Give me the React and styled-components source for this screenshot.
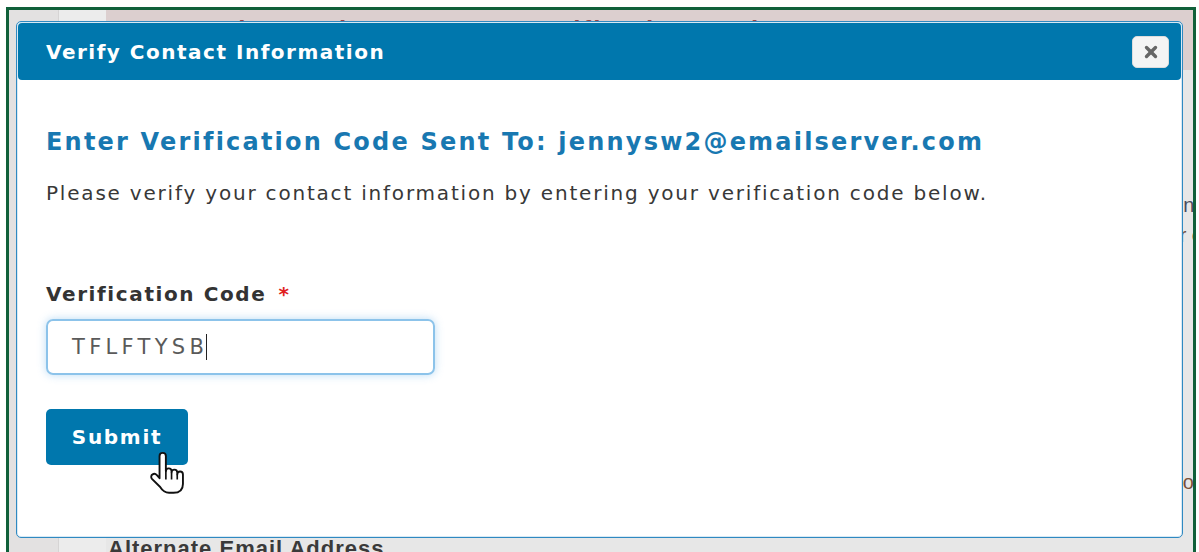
import styled, { createGlobalStyle } from "styled-components"
import { X } from "lucide-react"

const GlobalStyle = createGlobalStyle`
  html, body {
    margin: 0;
    padding: 0;
    background: #ffffff;
    overflow: hidden;
  }
  * {
    box-sizing: border-box;
  }
`

const Screen = styled.div`
  position: relative;
  width: 1199px;
  height: 552px;
  padding: 7px 3px 0 6px;
  overflow: hidden;
  font-family: "Liberation Sans", Arial, sans-serif;
`

/* page behind the dialog */
const Frame = styled.div`
  display: flex;
  height: 570px;
  border: 3px solid #10603a;
  border-bottom: none;
  overflow: hidden;
`

const SideRail = styled.div`
  width: 50px;
  flex: none;
  background: #e3e1e1;
  border-right: 1px solid #d6d4d4;
`

const SideGutter = styled.div`
  width: 47px;
  flex: none;
  background: #ececec;
`

const PageMain = styled.div`
  flex: 1;
  display: flex;
  flex-direction: column;
  background: #e7e7e7;
  min-width: 0;
`

const PageBanner = styled.div`
  height: 60px;
  flex: none;
  padding: 5px 0 0 113px;
  background: #dccfcf;
  color: #9a4545;
  font-size: 26px;
  line-height: 30px;
  font-weight: bold;
  letter-spacing: 2px;
  white-space: nowrap;
`

const PageBody = styled.div`
  display: flex;
  flex-direction: column;
`

const PeekLine = styled.div`
  margin-top: ${(p) => p.$gap}px;
  margin-right: ${(p) => p.$overhang}px;
  text-align: right;
  white-space: nowrap;
  font-size: 20px;
  line-height: 24px;
  color: ${(p) => p.$tone};
`

const PageHeading = styled.div`
  margin-top: 42px;
  padding-left: 2px;
  font-size: 22px;
  line-height: 26px;
  font-weight: bold;
  letter-spacing: 1px;
  color: #3a3a3a;
  white-space: nowrap;
`

/* dialog */
const Modal = styled.div`
  position: absolute;
  left: 16px;
  top: 21px;
  width: 1167px;
  height: 517px;
  display: flex;
  flex-direction: column;
  padding: 1px;
  background: #ffffff;
  border: 1px solid #2f89c1;
  border-radius: 5px;
  box-shadow: inset 0 0 0 1px #d7e9f5;
`

const ModalHeader = styled.div`
  height: 57px;
  flex: none;
  display: flex;
  align-items: center;
  justify-content: space-between;
  padding: 0 12px 0 28px;
  background: #0077ad;
  border-radius: 4px;
`

const ModalTitle = styled.h2`
  margin: 0;
  font-family: "DejaVu Sans", sans-serif;
  font-size: 20px;
  font-weight: bold;
  letter-spacing: 1.5px;
  color: #ffffff;
`

const CloseButton = styled.button`
  width: 37px;
  height: 32px;
  display: flex;
  align-items: center;
  justify-content: center;
  padding: 0;
  background: #f4f4f4;
  border: 1px solid #dcdcdc;
  border-radius: 5px;
  color: #666666;
  cursor: pointer;
`

const ModalBody = styled.div`
  display: flex;
  flex-direction: column;
  align-items: flex-start;
  padding: 47px 28px 0 28px;
`

const SentTo = styled.h3`
  margin: 0;
  font-family: "DejaVu Sans", sans-serif;
  font-size: 24px;
  line-height: 30px;
  font-weight: bold;
  letter-spacing: 2.2px;
  color: #1878b1;
`

const Hint = styled.p`
  margin: 23px 0 0;
  font-family: "DejaVu Sans", sans-serif;
  font-size: 20px;
  line-height: 26px;
  letter-spacing: 1.8px;
  color: #383838;
`

const FieldLabel = styled.label`
  margin-top: 75px;
  font-family: "DejaVu Sans", sans-serif;
  font-size: 20px;
  line-height: 26px;
  font-weight: bold;
  letter-spacing: 1.6px;
  color: #333333;
`

const Required = styled.span`
  margin-left: 12px;
  color: #e02020;
`

const CodeInput = styled.div`
  margin-top: 12px;
  width: 389px;
  height: 56px;
  display: flex;
  align-items: center;
  padding-left: 24px;
  border: 2px solid #8cc3ea;
  border-radius: 7px;
  box-shadow: 0 0 8px rgba(102, 175, 233, 0.45);
  font-family: "DejaVu Sans", sans-serif;
  font-size: 21px;
  letter-spacing: 4.3px;
  color: #5a5a5a;
`

const Caret = styled.span`
  width: 1px;
  height: 26px;
  margin-left: -2px;
  background: #222222;
`

const SubmitButton = styled.button`
  margin-top: 34px;
  width: 142px;
  height: 56px;
  padding: 0;
  background: #0077ad;
  border: none;
  border-radius: 5px;
  font-family: "DejaVu Sans", sans-serif;
  font-size: 20px;
  font-weight: bold;
  letter-spacing: 1.7px;
  color: #ffffff;
`

const Pointer = styled.svg`
  position: absolute;
  left: 148px;
  top: 451px;
`

const HandCursor = () => (
  <Pointer width="37" height="43" viewBox="0 0 29 34">
    <path
      d="M11.5 1.5A2.5 2.5 0 0 1 14 4V16A2.25 2.25 0 0 1 18.5 16V17A2.25 2.25 0 0 1 23 17V18.5A2.25 2.25 0 0 1 27.5 18.5V26C27.5 30.5 25 33 20 33H16.5C13 33 11 31 9.5 28.5L3 22C2 20.8 2.3 19.2 3.5 18.5C4.6 17.8 6 18.1 6.9 19.1L9 21.5V4A2.5 2.5 0 0 1 11.5 1.5Z"
      fill="#ffffff"
      stroke="#111111"
      strokeWidth="1.5"
      strokeLinejoin="round"
    />
    <path d="M14 16V22.5M18.5 17V22.5M23 18.5V22.5" stroke="#111111" strokeWidth="1.3" fill="none" />
  </Pointer>
)

const App = () => (
  <>
    <GlobalStyle />
    <Screen>
      <Frame>
        <SideRail />
        <SideGutter />
        <PageMain>
          <PageBanner>Electronic Statement Verification Option</PageBanner>
          <PageBody>
            <PeekLine $gap={123} $overhang={-17} $tone="#4a4c5e">
              ns:
            </PeekLine>
            <PeekLine $gap={6} $overhang={-20} $tone="#6b4a3a">
              r co
            </PeekLine>
            <PeekLine $gap={223} $overhang={-12} $tone="#7a5038">
              ou
            </PeekLine>
            <PageHeading>Alternate Email Address</PageHeading>
          </PageBody>
        </PageMain>
      </Frame>

      <Modal>
        <ModalHeader>
          <ModalTitle>Verify Contact Information</ModalTitle>
          <CloseButton aria-label="Close">
            <X size={18} strokeWidth={4.5} />
          </CloseButton>
        </ModalHeader>
        <ModalBody>
          <SentTo>Enter Verification Code Sent To: jennysw2@emailserver.com</SentTo>
          <Hint>Please verify your contact information by entering your verification code below.</Hint>
          <FieldLabel>
            Verification Code<Required>*</Required>
          </FieldLabel>
          <CodeInput>
            TFLFTYSB
            <Caret />
          </CodeInput>
          <SubmitButton>Submit</SubmitButton>
        </ModalBody>
      </Modal>

      <HandCursor />
    </Screen>
  </>
)

export default App
